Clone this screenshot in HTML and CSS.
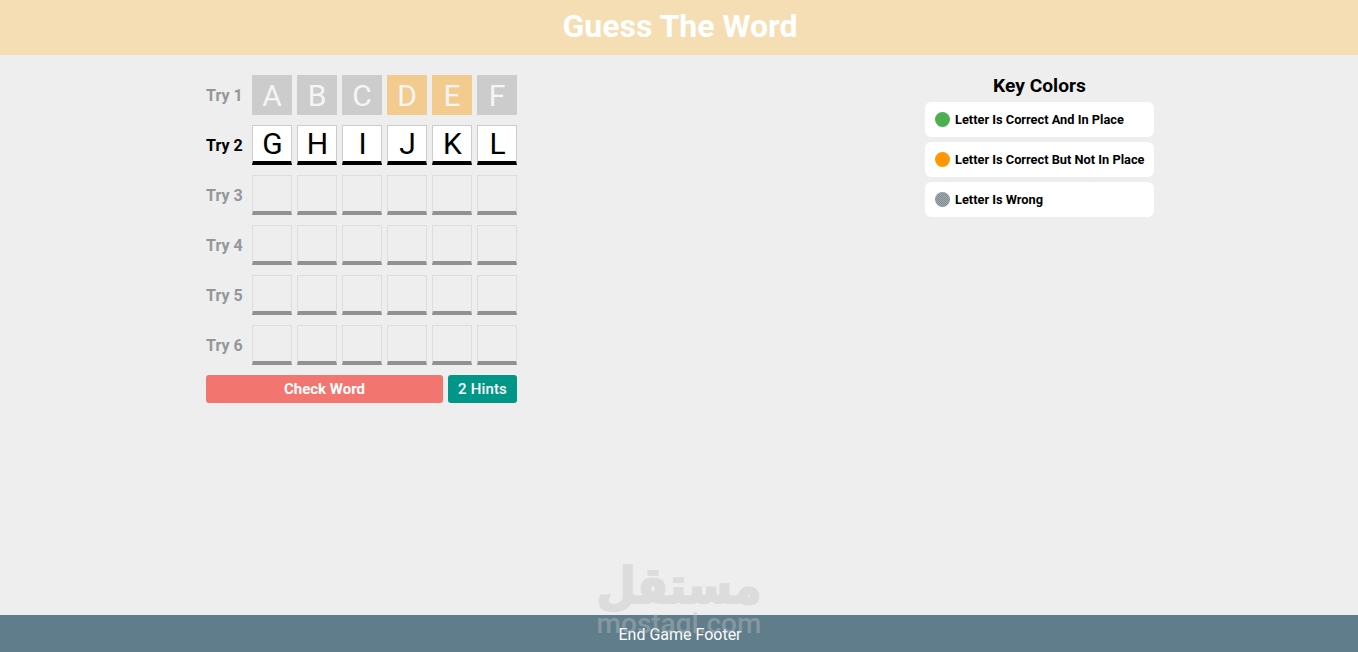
FILE: index.html
```html
<!DOCTYPE html>
<html lang="en">
<head>
  <meta charset="UTF-8" />
  <meta name="viewport" content="width=device-width, initial-scale=1.0"/>
  <title>Guess The Word</title>
  <link rel="stylesheet" href="styles.css">
</head>
<body>
  <h1 class="title">Guess The Word</h1>

  <main class="guess-game">
    <div class="game-area">
      <div class="inputs">
        <div class="try done">
          <span class="try-label">Try 1</span>
          <span class="tile wrong">A</span>
          <span class="tile wrong">B</span>
          <span class="tile wrong">C</span>
          <span class="tile not-place">D</span>
          <span class="tile not-place">E</span>
          <span class="tile wrong">F</span>
        </div>
        <div class="try active">
          <span class="try-label">Try 2</span>
          <span class="tile">G</span>
          <span class="tile">H</span>
          <span class="tile">I</span>
          <span class="tile">J</span>
          <span class="tile">K</span>
          <span class="tile">L</span>
        </div>
        <div class="try">
          <span class="try-label">Try 3</span>
          <span class="tile"></span><span class="tile"></span><span class="tile"></span>
          <span class="tile"></span><span class="tile"></span><span class="tile"></span>
        </div>
        <div class="try">
          <span class="try-label">Try 4</span>
          <span class="tile"></span><span class="tile"></span><span class="tile"></span>
          <span class="tile"></span><span class="tile"></span><span class="tile"></span>
        </div>
        <div class="try">
          <span class="try-label">Try 5</span>
          <span class="tile"></span><span class="tile"></span><span class="tile"></span>
          <span class="tile"></span><span class="tile"></span><span class="tile"></span>
        </div>
        <div class="try">
          <span class="try-label">Try 6</span>
          <span class="tile"></span><span class="tile"></span><span class="tile"></span>
          <span class="tile"></span><span class="tile"></span><span class="tile"></span>
        </div>
      </div>
      <div class="control">
        <button class="check">Check Word</button>
        <button class="hint">2 Hints</button>
      </div>
    </div>

    <div class="key-colors">
      <h2>Key Colors</h2>
      <div class="key-color">
        <span class="dot in-place"></span>
        <span class="key-text">Letter Is Correct And In Place</span>
      </div>
      <div class="key-color">
        <span class="dot not-in-place"></span>
        <span class="key-text">Letter Is Correct But Not In Place</span>
      </div>
      <div class="key-color">
        <span class="dot no"></span>
        <span class="key-text">Letter Is Wrong</span>
      </div>
    </div>
  </main>

  <footer class="footer">End Game Footer</footer>

  <div class="watermark">
    <span class="wm-arabic" lang="ar" dir="rtl">مستقل</span>
    <span class="wm-latin">mostaql.com</span>
  </div>
</body>
</html>
```

FILE: styles.css
```css
* {
  box-sizing: border-box;
}

body {
  margin: 0;
  min-height: 100vh;
  display: flex;
  flex-direction: column;
  background: #eee;
  font-family: Roboto, sans-serif;
  overflow: hidden;
}

.title {
  margin: 0;
  height: 55px;
  line-height: 52px;
  padding-left: 2px;
  text-align: center;
  font-size: 32px;
  font-weight: 700;
  color: #fff;
  background: #f5deb3;
}

.guess-game {
  flex: 1;
  display: flex;
  align-items: flex-start;
  padding: 20px 0 0 206px;
}

.game-area {
  width: 311px;
}

.inputs {
  display: flex;
  flex-direction: column;
  gap: 10px;
}

.try {
  display: flex;
  align-items: center;
  gap: 5px;
}

.try-label {
  width: 41px;
  font-size: 16px;
  font-weight: 700;
  color: #93979a;
  white-space: nowrap;
}

.active .try-label {
  color: #000;
}

.tile {
  width: 40px;
  height: 40px;
  display: flex;
  align-items: center;
  justify-content: center;
  font-size: 30px;
  color: #000;
  background: transparent;
  border: 1px solid #ddd;
  border-bottom: 4px solid #919191;
}

.active .tile {
  padding-left: 1px;
  background: #fff;
  border-color: #ccc;
  border-bottom-color: #000;
}

.done .tile {
  border: none;
  color: #f5f5f5;
}

.tile.wrong {
  background: #ccc;
}

.tile.not-place {
  background: #f4cb8f;
}

.control {
  display: flex;
  gap: 5px;
  margin-top: 10px;
}

.control button {
  height: 28px;
  border: none;
  border-radius: 3px;
  padding: 0;
  font-family: inherit;
  font-size: 15px;
  color: #fff;
}

.check {
  flex: 1;
  font-weight: 700;
  background: #f3756f;
}

.hint {
  width: 69px;
  font-weight: 500;
  letter-spacing: 0.15px;
  background: #009688;
}

.key-colors {
  width: 229px;
  margin-left: 408px;
}

.key-colors h2 {
  margin: 0 0 5px;
  height: 22px;
  line-height: 21px;
  text-align: center;
  font-size: 19.2px;
  font-weight: 700;
  color: #000;
}

.key-color {
  height: 35px;
  margin-bottom: 5px;
  padding-left: 10px;
  display: flex;
  align-items: center;
  gap: 5px;
  background: #fff;
  border-radius: 6px;
}

.dot {
  width: 15px;
  height: 15px;
  border-radius: 50%;
}

.in-place {
  background: #4caf50;
}

.not-in-place {
  background: #ff9800;
}

.no {
  background: repeating-conic-gradient(#7f8c92 0 25%, #a0a9ad 0 50%) 0 0 / 2px 2px;
}

.key-text {
  font-size: 12.8px;
  font-weight: 700;
  color: #000;
  white-space: nowrap;
}

.footer {
  height: 37px;
  line-height: 39px;
  padding-left: 2px;
  text-align: center;
  font-size: 16px;
  color: #fff;
  background: #607d8b;
}

/* sits over the page and the footer bar */
.watermark {
  position: absolute;
  left: 590px;
  top: 555px;
  width: 178px;
  display: flex;
  flex-direction: column;
  align-items: center;
  color: #c1c1c1;
  opacity: 0.38;
  pointer-events: none;
}

.wm-arabic {
  height: 58px;
  line-height: 62px;
  font-family: "DejaVu Sans", sans-serif;
  font-size: 45px;
  font-weight: 700;
  -webkit-text-stroke: 2px #c1c1c1;
  transform: scaleY(1.12);
}

.wm-latin {
  height: 24px;
  line-height: 22px;
  font-family: Roboto, sans-serif;
  font-size: 28px;
  font-weight: 500;
}
```
